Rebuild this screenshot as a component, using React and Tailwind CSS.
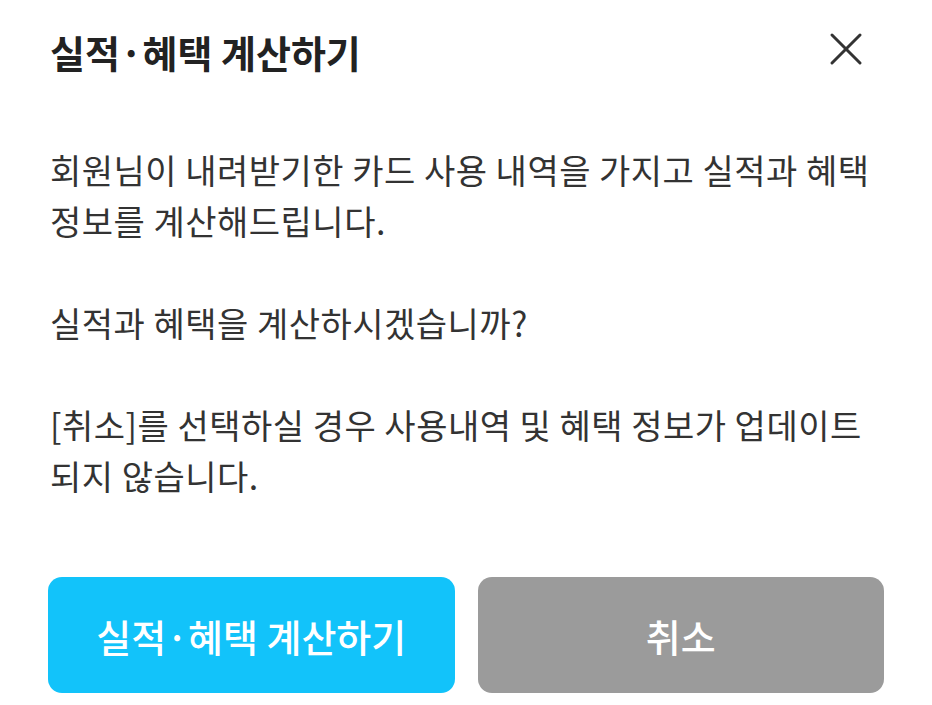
import { X } from 'lucide-react';

const font = { fontFamily: '"Noto Sans CJK KR", "Noto Sans", sans-serif' };

export default function App() {
  return (
    <div className="w-[932px] h-[705px] bg-white text-[#333333] overflow-hidden" style={font}>
      <div className="flex items-center justify-between pl-[50px] pr-[58px] pt-[24px] h-[80px]">
        <h1 className="text-[38px] leading-[52px] font-bold text-[#222222]">실적·혜택 계산하기</h1>
        <button className="text-[#333333] -mt-[6px]">
          <X className="w-[56px] h-[56px]" strokeWidth={1.3} />
        </button>
      </div>

      <div className="px-[50px] pt-[64px] text-[34px] leading-[51px] tracking-[0.5px] space-y-[51px]">
        <p>
          회원님이 내려받기한 카드 사용 내역을 가지고 실적과 혜택
          <br />
          정보를 계산해드립니다.
        </p>
        <p>실적과 혜택을 계산하시겠습니까?</p>
        <p>
          [취소]를 선택하실 경우 사용내역 및 혜택 정보가 업데이트
          <br />
          되지 않습니다.
        </p>
      </div>

      <div className="flex gap-[23px] px-[48px] mt-[76px]">
        <button className="flex-1 h-[116px] rounded-[14px] bg-[#12C3FA] text-white text-[38px] font-medium">
          실적·혜택 계산하기
        </button>
        <button className="flex-1 h-[116px] rounded-[14px] bg-[#9B9B9B] text-white text-[38px] font-medium">
          취소
        </button>
      </div>
    </div>
  );
}
